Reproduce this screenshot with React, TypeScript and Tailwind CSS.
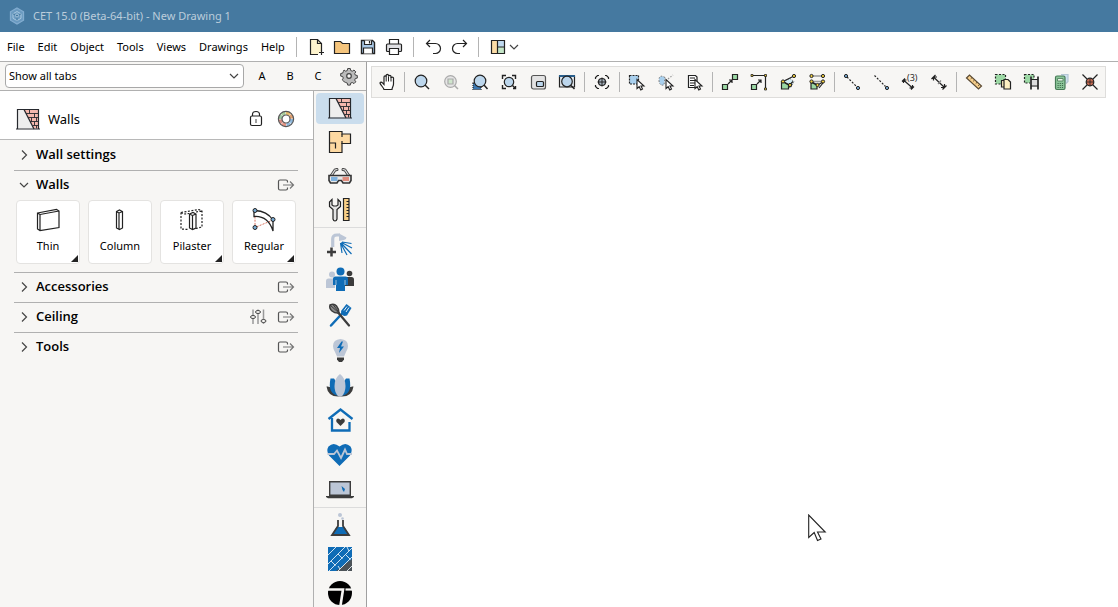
import type { ReactNode } from "react";
import clsx from "clsx";

type Item = { label: string; icon: ReactNode };

/* ---------- Shared icon pieces ---------- */

const Icon = ({ children }: { children: ReactNode }) => (
  <svg viewBox="0 0 20 20" className="size-5 shrink-0" fill="none" stroke="#222" strokeWidth="1.2" aria-hidden="true">
    {children}
  </svg>
);

const TabIcon = ({ children }: { children: ReactNode }) => (
  <svg viewBox="0 0 28 28" className="size-7 shrink-0" fill="none" stroke="none" aria-hidden="true">
    {children}
  </svg>
);

const Pointer = () => (
  <path d="M10 7.5v9l2.2-1.8 1.6 3.2 1.7-.8-1.5-3.1h3z" fill="#fff" stroke="#222" strokeWidth="1.1" />
);

const Node = ({ x, y, fill = "#f0cd3c" }: { x: number; y: number; fill?: string }) => (
  <circle cx={x} cy={y} r="1.6" fill={fill} stroke="#222" strokeWidth="1" />
);

const Chevron = ({ open = false }: { open?: boolean }) => (
  <svg viewBox="0 0 12 12" className="size-3 shrink-0" fill="none" stroke="#444" strokeWidth="1.2" aria-hidden="true">
    <path d={open ? "M2 4 6 8l4-4" : "M4 1.5 8.500 6 4 10.500"} />
  </svg>
);

const ExportIcon = () => (
  <svg viewBox="0 0 20 20" className="size-5" fill="none" aria-hidden="true">
    <path d="M11.500 7.500V6.500q0-1.500-1.500-1.500H4Q2.500 5 2.500 6.500v7Q2.500 15 4 15h6q1.500 0 1.500-1.500V12.500" stroke="#555" strokeWidth="1.2" />
    <path d="M7 10h10.500M14 6.500 17.500 10 14 13.500" stroke="#777" strokeWidth="1.2" />
  </svg>
);

const Bricks = () => (
  <g>
    <path d="M3.500 4.500H10l10 19H3.500z" fill="#eee" />
    <path d="M10 4.500h14.500v19H20z" fill="#f5b8ae" />
    <path
      d="M12 8.500h12.500M14 12.500h10.500M16 16.500h8.500M18.500 20.500h6M15.500 4.500v4M20.500 8.500v4M17.500 12.500v4M22.500 12.500v4M20.500 16.500v4M22.500 20.500v3"
      stroke="#26292e"
      strokeWidth=".9"
    />
    <path d="M3.500 24V4.500h21V24M2 24h24" stroke="#26292e" strokeWidth="1.2" />
    <path d="m10 4.500 10 19.500" stroke="#26292e" strokeWidth="1.3" />
  </g>
);

/* ---------- Menu bar ---------- */

const menus = ["File", "Edit", "Object", "Tools", "Views", "Drawings", "Help"];

const fileActions: Item[] = [
  {
    label: "New",
    icon: (
      <Icon>
        <path d="M12 17.500H4.500v-15h7l4 4v7" fill="#fdf3cd" />
        <path d="M11.500 2.500v4h4M15.500 13v5M13 15.500h5" />
      </Icon>
    ),
  },
  {
    label: "Open",
    icon: (
      <Icon>
        <path d="M2.500 16.500v-12h6l2 2h7v10z" fill="#f5c57d" />
      </Icon>
    ),
  },
  {
    label: "Save",
    icon: (
      <Icon>
        <path d="M3.500 3.500h11l2 2v11h-13z" fill="#a9c8e6" strokeWidth="1.400" />
        <path d="M6.500 3.500v4h7v-4M5.500 16.500v-5.500h9v5.500" fill="#fff" />
        <path d="M11.500 4v2.500" />
      </Icon>
    ),
  },
  {
    label: "Print",
    icon: (
      <Icon>
        <path d="M5.500 7V2.500h9V7" fill="#fff" />
        <rect x="2.500" y="7" width="15" height="7.500" rx="1" fill="#e0e0e4" />
        <path d="M5.500 11.500h9v6h-9z" fill="#fff" />
      </Icon>
    ),
  },
];

const historyActions: Item[] = [
  {
    label: "Undo",
    icon: (
      <Icon>
        <path d="M7 3 3.500 6.500 7 10M3.500 6.500h9a5 5 0 0 1 0 10H10" />
      </Icon>
    ),
  },
  {
    label: "Redo",
    icon: (
      <Icon>
        <path d="m13 3 3.500 3.500L13 10M16.500 6.500h-9a5 5 0 0 0 0 10H10" />
      </Icon>
    ),
  },
];

/* ---------- Drawing toolbar ---------- */

const toolGroups: Item[][] = [
  [
    {
      label: "Pan",
      icon: (
        <Icon>
          <path
            d="M7 17.500c-.5-2-3.500-4.500-4-6.500 0-1.200 1.800-1.200 2.500 0l1.500 1.500V5c0-1.500 2.200-1.500 2.200 0V3.500c0-1.500 2.300-1.500 2.300 0v1c0-1.500 2.500-1.500 2.500 0V6c0-1.300 2.500-1.300 2.500 0v6c0 2.500-1.500 3.500-1.500 5.500z"
            fill="#fff"
          />
          <path d="M9.200 5v4.500M11.500 4.500v5M14 5.500v4" strokeWidth="1" />
        </Icon>
      ),
    },
  ],
  [
    {
      label: "Zoom",
      icon: (
        <Icon>
          <circle cx="9" cy="9" r="5.800" fill="#bcd6ec" />
          <path d="m13 13 4 4" strokeWidth="1.500" />
        </Icon>
      ),
    },
    {
      label: "Zoom selection",
      icon: (
        <Icon>
          <g stroke="#aaa">
            <circle cx="9.500" cy="9.500" r="5.800" fill="#e6e6e6" />
            <path d="m13.500 13.500 3.500 3.500" strokeWidth="1.500" />
            <path d="M7 7h5v5H7z" fill="#cfe5cc" />
          </g>
        </Icon>
      ),
    },
    {
      label: "Zoom window",
      icon: (
        <Icon>
          <path d="M3 11h8v6.500H3z" fill="#3d78b0" strokeDasharray="1 1" />
          <circle cx="10" cy="9" r="5.800" fill="#bcd6ec" />
          <path d="m14 13 3.500 4" strokeWidth="1.500" />
        </Icon>
      ),
    },
    {
      label: "Zoom all",
      icon: (
        <Icon>
          <path d="M3.500 7V3.500H7M13 3.500h3.500V7M3.500 13v3.500H7M16.500 14v2.500H14" strokeWidth="1.400" />
          <circle cx="10" cy="10" r="4.700" fill="#bcd6ec" />
          <path d="m13.500 13.500 3 3" strokeWidth="1.500" />
        </Icon>
      ),
    },
    {
      label: "Viewport",
      icon: (
        <Icon>
          <rect x="3.500" y="3.500" width="14" height="13.500" rx="2" fill="#e3e3e3" stroke="#555" />
          <rect x="8.500" y="9.500" width="7" height="5" rx="1" fill="#bcd6ec" />
        </Icon>
      ),
    },
    {
      label: "Zoom page",
      icon: (
        <Icon>
          <path d="M2.500 4h15v11h-15z" fill="#e8eef3" />
          <path d="M2 4h16" stroke="#2a5f8c" strokeWidth="2" />
          <circle cx="10" cy="9.500" r="5.300" fill="#bcd6ec" />
          <path d="m14 13.500 3.500 3.500" strokeWidth="1.500" />
        </Icon>
      ),
    },
  ],
  [
    {
      label: "Center view",
      icon: (
        <Icon>
          <path d="M3.500 7V5.500l2-2H7M13 3.500h1.500l2 2V7M3.500 13v1.500l2 2H7M16.500 13v1.500l-2 2H13" />
          <circle cx="10" cy="10" r="3.500" fill="#a9b6c2" />
          <path d="M10 5.500v9M5.500 10h9" strokeWidth="1" />
        </Icon>
      ),
    },
  ],
  [
    {
      label: "Select rectangle",
      icon: (
        <Icon>
          <path d="M2.500 3.500h9v8.500h-9z" fill="#a9d0ee" strokeDasharray="2 1" />
          <Pointer />
        </Icon>
      ),
    },
    {
      label: "Select lasso",
      icon: (
        <Icon>
          <path d="M9 5.500Q3 2 3 8t5 5z" fill="#a9d0ee" stroke="#777" strokeWidth="1" strokeDasharray="1.500 1.500" />
          <path d="m12 7 5-4" stroke="#999" strokeDasharray="1.500 1.500" />
          <Pointer />
        </Icon>
      ),
    },
    {
      label: "Select from list",
      icon: (
        <Icon>
          <path d="M3.500 3.500h7l1.500 1.500v10.500H3.500z" fill="#fff" />
          <path d="M5 6h5M5 8.500h5M5 11h5M5 13.500h4" />
          <Pointer />
        </Icon>
      ),
    },
  ],
  [
    {
      label: "Scale",
      icon: (
        <Icon>
          <path d="M12.500 2.500h5v5h-5zM2.500 12.500h5v5h-5z" fill="#9bd8a4" />
          <path d="m8 12 4-4M9 8h3v3" />
        </Icon>
      ),
    },
    {
      label: "Stretch",
      icon: (
        <Icon>
          <path d="M3 3.500h13.500v14" />
          <path d="M2.500 12.500h5v5h-5z" fill="#9bd8a4" />
          <path d="m8 12 4-4M9 8h3v3" />
          <path d="M2 2.500h2v2H2zM15.500 2.500h2v2h-2zM15.500 16h2v2h-2z" fill="#f0cd3c" strokeWidth=".8" />
        </Icon>
      ),
    },
    {
      label: "Align to points",
      icon: (
        <Icon>
          <path d="m5 9.500 7-3 4 3-3 6h-3z" fill="#d3ecf5" stroke="#888" strokeWidth="1" strokeDasharray="1.500 1" />
          <path d="M3.500 9.500h1l6 3.500v4h-7z" fill="#9bd8a4" />
          <path d="m6 9 9-4.500M6 10l5.500 3 3.500-3.500" />
          <Node x={16} y={4} />
          <Node x={5} y={9.500} />
          <Node x={12} y={13} />
        </Icon>
      ),
    },
    {
      label: "Distribute",
      icon: (
        <Icon>
          <path d="M5 4h11M5 9.500h11" strokeWidth="1.600" stroke="#999" />
          <path d="M4 10.500 10 13v4H4z" fill="#9bd8a4" />
          <path d="m5 10 5.500 3L16 10M12 16l4-5" />
          <Node x={4.500} y={4} />
          <Node x={16} y={4} />
          <Node x={4.500} y={9.500} />
          <Node x={16} y={9.500} />
          <Node x={10.500} y={13} />
        </Icon>
      ),
    },
  ],
  [
    {
      label: "Measure between points",
      icon: (
        <Icon>
          <path d="m5 5 10 10" strokeDasharray="2 1.500" />
          <Node x={4} y={4} fill="#79abd4" />
          <Node x={16} y={16} fill="#79abd4" />
        </Icon>
      ),
    },
    {
      label: "Measure to point",
      icon: (
        <Icon>
          <path d="m3.500 3.500 11 11" strokeDasharray="2 1.500" />
          <Node x={16} y={16} fill="#79abd4" />
        </Icon>
      ),
    },
    {
      label: "Chained dimension",
      icon: (
        <Icon>
          <path d="m3.500 8 9 8M3.500 11V8h3M12.500 13v3H9.500M2 9.500 5 6.500M11 17.500l3-3" />
          <text x="7" y="9" fill="#222" stroke="none" fontSize="9" fontFamily="Open Sans, sans-serif">
            (3)
          </text>
        </Icon>
      ),
    },
    {
      label: "Dimension",
      icon: (
        <Icon>
          <path d="m4.500 5 11 10.500M4.500 8.500V5H8M15.500 12v3.500H12M2.500 7l4-4M13.500 17.500l4-4" />
          <path d="m9 12 3-3.500" stroke="#888" />
        </Icon>
      ),
    },
  ],
  [
    {
      label: "Ruler",
      icon: (
        <Icon>
          <path d="m2.500 6 3-3L17.500 14l-3 3z" fill="#f7cf8b" stroke="#5a4a33" />
          <path d="m8 5.500-1.300 1.300M10.500 8 9.200 9.300M13 10.300l-1.300 1.300M15.500 12.500l-1.300 1.300" stroke="#5a4a33" strokeWidth="1" />
        </Icon>
      ),
    },
    {
      label: "Copy properties",
      icon: (
        <Icon>
          <path d="M2.500 2.500h10v9.500h-10z" fill="#9bd8a4" strokeDasharray="2 1.500" />
          <path d="M8.500 8.500h5V15h-5z" fill="#fdf0c3" />
          <path d="M11 7.500h4l2.500 2.500v7H11z" fill="#fdf0c3" />
        </Icon>
      ),
    },
    {
      label: "Paste properties",
      icon: (
        <Icon>
          <path d="M2.500 2.500h9.500V11H2.500z" fill="#9bd8a4" strokeDasharray="2 1.500" />
          <path d="M9 7h7v8H9z" fill="#ddd" stroke="none" />
          <path d="M9 4.500v13M16 4.500v13" strokeWidth="2" stroke="#444" />
          <path d="M9 7.500h7M9 14h7" />
        </Icon>
      ),
    },
    {
      label: "Calculation",
      icon: (
        <Icon>
          <path d="M10 2.500h7v7l-2 2" fill="#cfe1f0" stroke="#b4c6d4" />
          <rect x="4.500" y="4" width="9.500" height="13.500" rx="1.500" fill="#8cc69a" stroke="#477a56" />
          <path d="M6.500 6.500h5.500v2.500H6.500z" fill="#e3f3e2" stroke="#477a56" strokeWidth=".8" />
          <path d="M6.500 11.500h6M6.500 13.500h6M6.500 15.500h6" stroke="#3f6b4c" strokeWidth="1" strokeDasharray="1.200 1" />
        </Icon>
      ),
    },
    {
      label: "Remove snap",
      icon: (
        <Icon>
          <path d="m2.500 2.500 15 15M17.500 2.500l-15 15" />
          <circle cx="10" cy="10" r="3.800" fill="#c66a52" />
          <path d="M10 6.500v7M6.500 10h7" strokeWidth=".8" />
        </Icon>
      ),
    },
  ],
];

/* ---------- Tab strip ---------- */

const tabGroups: Item[][] = [
  [
    { label: "Walls", icon: <TabIcon><Bricks /></TabIcon> },
    {
      label: "Floor plan",
      icon: (
        <TabIcon>
          <path d="M3.500 3.500H16V6h8.500v9.500H16v9H3.500z" fill="#fdd9a2" stroke="#222" strokeWidth="1.200" />
          <path d="M16 6v3M16 13v3M3.500 15h6v5.500" stroke="#222" strokeWidth="1.200" />
        </TabIcon>
      ),
    },
    {
      label: "3D view",
      icon: (
        <TabIcon>
          <path d="m5 14 4-6 2-.5M23 14l-4-6-2-.5" stroke="#444" strokeWidth="3" strokeLinecap="round" />
          <path d="m5 14 4-6 2-.5M23 14l-4-6-2-.5" stroke="#dedede" strokeWidth="1.200" strokeLinecap="round" />
          <path d="M3 13.500h22v5L23.500 21H17l-1.500-2.500h-3L11 21H4.500L3 18.500z" fill="#e8e8e8" stroke="#333" strokeWidth="1.600" />
          <path d="M5 15h6.500v4H5z" fill="#7fb1dd" />
          <path d="M16.500 15H23v4h-6.500z" fill="#e08c7d" />
        </TabIcon>
      ),
    },
    {
      label: "Maintenance",
      icon: (
        <TabIcon>
          <path
            d="M6 3.500 3.500 6v4.500l3.500 3V23q.500 2 2 2t2-2v-9.500l3.500-3V6L12 3.500V9l-1.500 1h-3L6 9z"
            fill="#e4e4e4"
            stroke="#222"
            strokeWidth="1.200"
          />
          <path d="M17.500 2.500h5.500v22h-5.500z" fill="#f9cf86" stroke="#222" strokeWidth="1.200" />
          <path d="M20.500 5.500H23M20.500 8.500H23M20.500 11.500H23M20.500 14.500H23M20.500 17.500H23M20.500 20.500H23" stroke="#222" />
        </TabIcon>
      ),
    },
  ],
  [
    {
      label: "Bath",
      icon: (
        <TabIcon>
          <path d="M6.700 16V8Q6.700 4 11 4h3" stroke="#bcc6d6" strokeWidth="3.200" />
          <path d="m13 2.500 7.500 4q0 1.500-2.500 2.500l-5 1z" fill="#bcc6d6" />
          <path d="M5.500 16.500v9M1 21h9" stroke="#3c3c3c" strokeWidth="2.500" />
          <path
            d="m16 11 9.500 1.500M15.500 11.500l10.500 5.500M15 12l10.500 11M14.500 12l6.500 12M14.500 12l1.500 10"
            stroke="#0f6cb6"
            strokeWidth="1.200"
          />
        </TabIcon>
      ),
    },
    {
      label: "People",
      icon: (
        <TabIcon>
          <circle cx="6" cy="8.500" r="3" fill="#bcc6d6" />
          <path d="M0 22v-7q0-2.500 2.500-2.500H9V22z" fill="#bcc6d6" />
          <circle cx="23.500" cy="7.500" r="2.800" fill="#3c3c3c" />
          <path d="M19 11h6.500Q28 11 28 13.500V20h-9z" fill="#3c3c3c" />
          <circle cx="14.500" cy="5.500" r="4" fill="#0f6cb6" />
          <path d="M7 19v-6q0-2.500 2.500-2.500h10Q22 10.500 22 13v6h-3v6h-9v-6z" fill="#0f6cb6" />
          <path d="M10 14v5M19 14v5" stroke="#f7f6f4" strokeWidth=".6" />
        </TabIcon>
      ),
    },
    {
      label: "Kitchen",
      icon: (
        <TabIcon>
          <path d="m17 11.500-12 13" stroke="#0f6cb6" strokeWidth="2.500" strokeLinecap="round" />
          <path d="m15 10 5.500-7 5 4-4.500 7.500q-3 1-4.500-.5T15 10z" fill="#0f6cb6" />
          <path d="m18 9.500 3-4M20 11l3-4.500" stroke="#e7eff6" strokeWidth="1" />
          <path d="m10 9 13 15.500" stroke="#3c3c3c" strokeWidth="2.200" strokeLinecap="round" />
          <path d="M4 4q4-2 6.500 1T13 12q-4 .500-7-2T4 4z" fill="#8a8a8a" stroke="#3c3c3c" strokeWidth="1.500" />
          <path d="m4 4 9 8M7 3.500l6 8" stroke="#3c3c3c" />
        </TabIcon>
      ),
    },
    {
      label: "Lighting",
      icon: (
        <TabIcon>
          <path d="M14.500 3Q22 3.500 22 10q0 3-2 6l-2 4.500h-7L9 16q-2-3-2-6 0-6.500 7.500-7z" fill="#bcc6d6" />
          <path d="M15.500 5.500 11 12h3l-1 5 5-6.500h-3l2-5z" fill="#0f6cb6" />
          <path d="M11 21.500h7v2L16 26h-3l-2-2.500z" fill="#3c3c3c" />
        </TabIcon>
      ),
    },
    {
      label: "Wellness",
      icon: (
        <TabIcon>
          <path d="M.500 15.500q6-1 13.500 10Q2 26.500.500 15.500zM27.500 15.500q-6-1-13.500 10 12 1 13.500-10z" fill="#3c3c3c" />
          <path d="M4.500 7.500H8q5 6 6 17.500Q1 24 4.500 7.500zM23.500 7.500H20q-5 6-6 17.500 13-1 9.500-17.500z" fill="#0f6cb6" />
          <path d="M14 3q5.500 4 5.500 12 0 7-4 10.500h-3q-4-3.500-4-10.500Q8.500 7 14 3z" fill="#bcc6d6" />
        </TabIcon>
      ),
    },
    {
      label: "Home care",
      icon: (
        <TabIcon>
          <path d="M2.500 13 14.500 3.500l12 9.500M6 12v12.500h17.500V16" stroke="#0f6cb6" strokeWidth="2.300" />
          <path d="m14.500 20-4-4q-1-3 1.500-3.500 1.500 0 2.500 1.500 1-1.500 2.500-1.500 2.500.500 1.500 3.500z" fill="#3c3c3c" />
        </TabIcon>
      ),
    },
    {
      label: "Healthcare",
      icon: (
        <TabIcon>
          <path d="M13.500 25 3 14.500Q0 9.500 2.500 5.500q5-5 11 0 6-5 11 0 2.500 4-.5 9z" fill="#0f6cb6" />
          <path d="M1.500 13H8l3-3.500 4 7.500 4-8.500 2 4.500h5" stroke="#bcc6d6" strokeWidth="1.800" />
        </TabIcon>
      ),
    },
    {
      label: "Technology",
      icon: (
        <TabIcon>
          <path d="M3.700 5.700h20.600v13.500H3.700z" fill="#bcc6d6" stroke="#3c3c3c" strokeWidth="1.400" />
          <path d="M0 20h28v1l-2 1.200H2L0 21z" fill="#3c3c3c" />
          <path d="m15.500 10 3.500 3-1 3-1.500-2z" fill="#0f6cb6" />
        </TabIcon>
      ),
    },
  ],
  [
    {
      label: "Laboratory",
      icon: (
        <TabIcon>
          <circle cx="14" cy="4" r="2" fill="#bcc6d6" />
          <circle cx="16.500" cy="7.500" r="1.300" fill="#bcc6d6" />
          <path d="m10.500 16-4 7h16l-4-7z" fill="#0f6cb6" />
          <path d="M12 9v6l-6 9h17l-6-9V9" stroke="#3c3c3c" strokeWidth="1.800" />
        </TabIcon>
      ),
    },
    {
      label: "Flooring",
      icon: (
        <TabIcon>
          <path d="M2 2h24v24H2z" fill="#0f6cb6" />
          <path d="M26 14v12H10z" fill="#4c5358" />
          <path
            d="M2 10l8-8M2 19 19 2M3 26 26 3M12 26l14-14M21 26l5-5M12 9l4.500 4.500M5 16l4.500 4.500M20 10l4.500 4.500M14 24l-2-3M21 2l2 4"
            stroke="#e7eff6"
            strokeWidth=".900"
          />
        </TabIcon>
      ),
    },
    {
      label: "Brand",
      icon: (
        <TabIcon>
          <circle cx="14" cy="14" r="12" fill="#000" />
          <path d="M1 10.500h16l-2.500 16" stroke="#f7f6f4" strokeWidth="2.600" />
          <path d="M19.500 10.500H27" stroke="#f7f6f4" strokeWidth="2.200" />
        </TabIcon>
      ),
    },
  ],
];

/* ---------- Wall components ---------- */

const wallTypes: (Item & { hasMore: boolean })[] = [
  {
    label: "Thin",
    hasMore: true,
    icon: (
      <TabIcon>
        <path d="m3.500 7 19-3.500L25 5v16.500L6 24.500l-2.500-1.500zM3.500 7 6 8.500v16M6 8.500 25 5" stroke="#222" strokeWidth="1.200" />
      </TabIcon>
    ),
  },
  {
    label: "Column",
    hasMore: false,
    icon: (
      <TabIcon>
        <path d="m10.500 5.500 3-1.500 3 1.500v16.500l-3 1.500-3-1.500zM10.500 5.500l2.500 1.500v16.500M13 7l3.500-1.500" stroke="#222" strokeWidth="1.200" />
      </TabIcon>
    ),
  },
  {
    label: "Pilaster",
    hasMore: true,
    icon: (
      <TabIcon>
        <path d="m3 6.500 18-3L24 5v16l-6 1.500M3 6.500V23l8 .5M3 6.500 6 8l5-.5M18 6l6-1" stroke="#222" strokeWidth="1.200" strokeDasharray="2 1.500" />
        <path d="m11.500 8 3.500-1.500L18 8v14l-3.500 1.500-3-1.500zM11.500 8l3 1.500v14M14.500 9.500 18 8" stroke="#222" strokeWidth="1.200" />
      </TabIcon>
    ),
  },
  {
    label: "Regular",
    hasMore: true,
    icon: (
      <TabIcon>
        <path d="M5 10.500V21.500L23 14" stroke="#d9735f" strokeDasharray="2 1.200" />
        <path d="M4 4.500v6q14-1 19 14.500v-11Q17 5 5 4.500" stroke="#222" strokeWidth="1.300" />
        <g fill="#79abd4" stroke="#222">
          <circle cx="5" cy="4.500" r="2" />
          <circle cx="23" cy="13.500" r="2" />
          <circle cx="5" cy="21.500" r="2" />
        </g>
      </TabIcon>
    ),
  },
];

const Separator = () => <span className="h-5 w-px shrink-0 bg-[#b4b4b4]" />;

const IconButton = ({ label, icon, className }: Item & { className: string }) => (
  <button type="button" aria-label={label} className={clsx("flex shrink-0 items-center justify-center", className)}>
    {icon}
  </button>
);

const Section = ({
  title,
  open = false,
  canExport = true,
  adjustable = false,
  children,
}: {
  title: string;
  open?: boolean;
  canExport?: boolean;
  adjustable?: boolean;
  children?: ReactNode;
}) => (
  <section className="mr-[15px] ml-3.5 border-t border-[#b0b0b0] first:border-transparent">
    <div className="flex h-[29px] items-center gap-2 pr-0.5 pb-0.5">
      <button
        type="button"
        aria-expanded={open}
        className="flex flex-1 items-center gap-1.5 pl-1 text-left font-['Open_Sans',sans-serif] text-[13px] font-semibold"
      >
        <Chevron open={open} />
        {title}
      </button>
      {adjustable && (
        <button type="button" aria-label={`Adjust ${title}`}>
          <svg viewBox="0 0 20 20" className="size-5" fill="none" aria-hidden="true">
            <path d="M5 2.500v14.500M10 2.500v14.500M15.500 2.500v14.500" stroke="#999" strokeWidth="1.500" />
            <g fill="#f7f6f4" stroke="#444">
              <ellipse cx="5" cy="10" rx="2.500" ry="1.500" />
              <ellipse cx="10" cy="5" rx="2.500" ry="1.500" />
              <ellipse cx="15.500" cy="14" rx="2.500" ry="1.500" />
            </g>
          </svg>
        </button>
      )}
      {canExport && (
        <button type="button" aria-label={`Undock ${title}`}>
          <ExportIcon />
        </button>
      )}
    </div>
    {children}
  </section>
);

const ringColors = ["#e8bd6a", "#e0a070", "#8fb8dc", "#8fb8dc", "#e79584", "#d98a80", "#9bc7a0", "#a9cf9a"];

const TitleBar = () => (
  <header className="flex h-8 shrink-0 items-center gap-[7px] bg-[#4579a0] pl-2 text-[#bccddb]">
    <svg viewBox="0 0 18 18" className="size-[18px]" fill="none" stroke="#83add0" aria-hidden="true">
      <path d="m9 1 6.500 3.800v8.400L9 17l-6.500-3.800V4.800z" fill="#6a9ac0" strokeWidth="1.300" />
      <path d="m9 4.500 4 2.300v4.500l-4 2.300-4-2.300V6.800z" stroke="#a8c8e0" />
      <path d="m5 6.800 4 2.300 4-2.300M9 9v4.500" stroke="#4579a0" />
      <circle cx="9" cy="8.500" r="1.500" fill="#4579a0" stroke="#a8c8e0" />
    </svg>
    <h1>CET 15.0 (Beta-64-bit) - New Drawing 1</h1>
  </header>
);

const MenuBar = () => (
  <nav className="flex h-[30px] shrink-0 items-center border-b border-[#b0b0b0] bg-white pl-px">
    <div className="flex w-[295px] gap-px pt-0.5">
      {menus.map((menu) => (
        <button key={menu} type="button" className="px-1.5">
          {menu}
        </button>
      ))}
    </div>
    <Separator />
    <div className="flex px-1.5">
      {fileActions.map((action) => (
        <IconButton key={action.label} {...action} className="h-7 w-[26px]" />
      ))}
    </div>
    <Separator />
    <div className="flex px-[5px]">
      {historyActions.map((action) => (
        <IconButton key={action.label} {...action} className="h-7 w-[27px]" />
      ))}
    </div>
    <Separator />
    <button type="button" aria-label="Window layout" className="flex items-center pl-[9px]">
      <Icon>
        <path d="M3.500 3.500h6v13h-6z" fill="#fbdca6" stroke="none" />
        <path d="M9.500 3.500h7V10h-7z" fill="#bfd9ef" stroke="none" />
        <path d="M9.500 10h7v6.500h-7z" fill="#c5e6c8" stroke="none" />
        <path d="M3.500 3.500h13v13h-13zM9.500 3.500v13M9.500 10h7" strokeWidth="1.200" />
      </Icon>
      <Chevron open />
    </button>
  </nav>
);

const FilterBar = () => (
  <div className="flex h-[29px] shrink-0 items-center border-b border-[#b0b0b0] pl-[5px]">
    <div className="relative mr-1 w-[239px] shrink-0">
      <select aria-label="Tab filter" className="h-6 w-full appearance-none rounded border border-[#a8a8a8] bg-white pl-[3px]">
        <option>Show all tabs</option>
      </select>
      <span className="pointer-events-none absolute inset-y-0 right-1 flex items-center">
        <Chevron open />
      </span>
    </div>
    {["A", "B", "C"].map((name) => (
      <button key={name} type="button" className="w-7 shrink-0 text-center">
        {name}
      </button>
    ))}
    <IconButton
      label="Settings"
      className="w-[34px]"
      icon={
        <Icon>
          <path
            d="M8.700 2.500h2.600l.4 2 1.600.7 1.700-1.200 1.800 1.900-1.100 1.700.6 1.500 2 .4v2.600l-2 .4-.6 1.600 1.100 1.700-1.800 1.800-1.700-1.100-1.600.6-.4 2H8.700l-.4-2-1.600-.6L5 15.600l-1.800-1.800 1.100-1.700-.6-1.600-2-.4V7.500l2-.4.600-1.500L5 4l1.700 1.200 1.600-.7z"
            fill="#bbb"
            stroke="#444"
            strokeWidth="1"
          />
          <circle cx="10" cy="10" r="2.300" fill="#f7f6f4" stroke="#444" />
        </Icon>
      }
    />
  </div>
);

const WallsPanel = () => (
  <aside className="flex min-w-0 flex-1 flex-col border-r border-[#b0b0b0]">
    <div className="flex h-[49px] shrink-0 items-center border-b border-[#b8b8b8] bg-white pt-2 pr-[17px] pl-3.5">
      <TabIcon>
        <Bricks />
      </TabIcon>
      <h2 className="ml-1.5 flex-1 pt-0.5 text-[13px]">Walls</h2>
      <button type="button" aria-label="Lock" className="mr-2.5">
        <Icon>
          <rect x="4.500" y="7" width="11" height="9.500" rx="1.500" />
          <path d="M6.500 7V5.500q0-3 3.500-3t3.500 3V7" />
          <path d="M10 10v4" stroke="#888" strokeWidth="1.600" />
        </Icon>
      </button>
      <button type="button" aria-label="Colors">
        <Icon>
          {ringColors.map((color, i) => (
            <circle
              key={i}
              cx="10"
              cy="10"
              r="5.800"
              stroke={color}
              strokeWidth="3.200"
              strokeDasharray="4 33"
              transform={`rotate(${i * 45 - 90} 10 10)`}
            />
          ))}
          <circle cx="10" cy="10" r="7.600" stroke="#555" />
          <circle cx="10" cy="10" r="4" stroke="#555" />
        </Icon>
      </button>
    </div>
    <div>
      <Section title="Wall settings" canExport={false} />
      <Section title="Walls" open>
        <div className="flex gap-2 px-0.5 pb-2">
          {wallTypes.map(({ label, icon, hasMore }) => (
            <button
              key={label}
              type="button"
              className="relative flex size-16 flex-col items-center rounded border border-[#e4e3e1] bg-white pt-[5px]"
            >
              {icon}
              <span className="mt-1 leading-4">{label}</span>
              {hasMore && (
                <svg viewBox="0 0 7 7" className="absolute right-px bottom-px size-[7px]" fill="#222" aria-hidden="true">
                  <path d="M7 0v7H0z" />
                </svg>
              )}
            </button>
          ))}
        </div>
      </Section>
      <Section title="Accessories" />
      <Section title="Ceiling" adjustable />
      <Section title="Tools" />
    </div>
  </aside>
);

const TabStrip = () => (
  <nav className="w-[52px] shrink-0 overflow-hidden">
    {tabGroups.map((group, g) => (
      <div key={g} className={clsx(g > 0 && "border-t border-[#dcdcdc]")}>
        {group.map((tab, i) => (
          <div key={tab.label} className={clsx("flex items-center px-0.5", g === 1 && i > 0 ? "h-[35px]" : "h-[34px]")}>
            <IconButton
              {...tab}
              className={clsx("h-[31px] w-full rounded-sm", g === 0 && i === 0 && "bg-[#cadded]")}
            />
          </div>
        ))}
      </div>
    ))}
  </nav>
);

const Canvas = () => (
  <main className="relative min-w-0 flex-1 overflow-hidden bg-white px-1 pt-1">
    <div className="flex h-8 w-fit items-center border border-[#dedddb] bg-[#f7f6f4] pr-px">
      {toolGroups.map((group, g) => (
        <div key={g} className="flex items-center">
          {g > 0 && (
            <span className="flex w-1.5 justify-center">
              <Separator />
            </span>
          )}
          {group.map((tool) => (
            <IconButton key={tool.label} {...tool} className="h-7 w-[29px]" />
          ))}
        </div>
      ))}
    </div>
    {/* Mouse pointer */}
    <svg viewBox="0 0 20 28" className="absolute top-[452px] left-[441px] h-7 w-5" fill="#fff" stroke="#222" strokeWidth="1.100" aria-hidden="true">
      <path d="M.700 1v22.500l5.500-5 3.300 8L13 25l-3.500-7h7.700z" />
    </svg>
  </main>
);

const App = () => {
  return (
    <div className="flex h-screen flex-col overflow-hidden bg-[#f7f6f4] font-['Noto_Sans',sans-serif] text-[11px] text-black">
      <TitleBar />
      <MenuBar />
      <div className="flex min-h-0 flex-1">
        <div className="flex w-[367px] shrink-0 flex-col border-r border-[#a0a0a0]">
          <FilterBar />
          <div className="flex min-h-0 flex-1">
            <WallsPanel />
            <TabStrip />
          </div>
        </div>
        <Canvas />
      </div>
    </div>
  );
};

export default App;
